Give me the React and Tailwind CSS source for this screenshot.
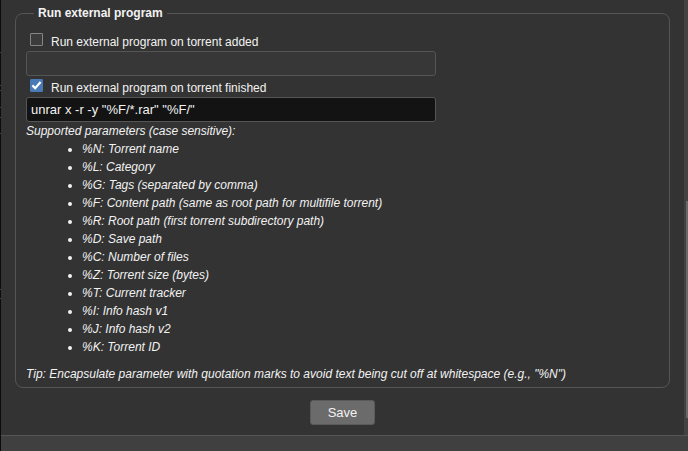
import { useState } from "react";

const parameters = [
  "%N: Torrent name",
  "%L: Category",
  "%G: Tags (separated by comma)",
  "%F: Content path (same as root path for multifile torrent)",
  "%R: Root path (first torrent subdirectory path)",
  "%D: Save path",
  "%C: Number of files",
  "%Z: Torrent size (bytes)",
  "%T: Current tracker",
  "%I: Info hash v1",
  "%J: Info hash v2",
  "%K: Torrent ID",
];

function ProgramOption({ id, label, initialEnabled, initialCommand }) {
  const [enabled, setEnabled] = useState(initialEnabled);
  const [command, setCommand] = useState(initialCommand);

  return (
    <div>
      <div className="flex items-start pt-[3px] pl-1">
        <span className="grid">
          <input
            id={id}
            type="checkbox"
            checked={enabled}
            onChange={(e) => setEnabled(e.target.checked)}
            className="peer col-start-1 row-start-1 size-[13px] appearance-none rounded-[1px] border border-[#858585] bg-[#3b3b3b] checked:border-[#4a7ab5] checked:bg-[#4a7ab5]"
          />
          <svg
            viewBox="0 0 13 13"
            aria-hidden="true"
            className="pointer-events-none invisible col-start-1 row-start-1 size-[13px] peer-checked:visible"
          >
            <path d="M2.4 6.4 5.2 9.2 10.6 3" fill="none" stroke="#fff" strokeWidth="2.2" />
          </svg>
        </span>
        <label htmlFor={id} className="ml-2">
          {label}
        </label>
      </div>
      <input
        type="text"
        aria-label={label + " command"}
        value={command}
        disabled={!enabled}
        onChange={(e) => setCommand(e.target.value)}
        className="block h-[25px] w-full max-w-[410px] rounded-[3px] border border-[#555555] bg-[#131313] px-1 text-[13px] text-[#f2f2f2] disabled:bg-[#373737]"
      />
    </div>
  );
}

function Scrollbar() {
  return (
    <div className="flex w-1 flex-col bg-[#424242] pl-[2px]" aria-hidden="true">
      <div className="grow-[201]" />
      <div className="grow-[217] bg-[#686868]" />
      <div className="grow-[17]" />
    </div>
  );
}

/* Sliver of the list behind the dialog, with its row lines. */
function BackgroundEdge() {
  return (
    <div className="w-px bg-[#0c0c0c]" aria-hidden="true">
      <div className="h-[53px] border-b border-[#444444]" />
      <div className="h-[33px] border-b border-[#444444]" />
      <div className="h-[5px] border-b border-[#444444]" />
      <div className="h-[17px] border-b border-[#444444]" />
      <div className="h-[10px] border-b border-[#444444]" />
      <div className="h-4 border-b border-[#444444]" />
      <div className="h-[156px] border-b border-[#444444]" />
      <div className="h-[9px] border-b border-[#444444]" />
    </div>
  );
}

export default function App() {
  return (
    <div className="flex min-h-screen bg-[#333333] font-['Liberation_Sans',Arial,sans-serif] text-[12px] leading-[18px] text-[#f2f2f2]">
      <BackgroundEdge />
      <div className="flex flex-1 flex-col">
        <div className="flex flex-1">
          <main className="flex-1 px-[14px] pt-1 pb-[10px]">
            <fieldset className="rounded-lg border border-[#555555] px-[10px] pt-2 pb-1">
              <legend className="ml-2 px-1 font-bold">Run external program</legend>
              <ProgramOption
                id="run-on-added"
                label="Run external program on torrent added"
                initialEnabled={false}
                initialCommand=""
              />
              <ProgramOption
                id="run-on-finished"
                label="Run external program on torrent finished"
                initialEnabled={true}
                initialCommand={'unrar x -r -y "%F/*.rar" "%F/"'}
              />
              <div className="italic">
                <p>Supported parameters (case sensitive):</p>
                <ul className="list-disc pl-14">
                  {parameters.map((text) => (
                    <li key={text}>{text}</li>
                  ))}
                </ul>
                <p className="pt-[9px]">
                  Tip: Encapsulate parameter with quotation marks to avoid text being cut off at
                  whitespace (e.g., "%N")
                </p>
              </div>
            </fieldset>
            <div className="mt-3 flex justify-center">
              <button
                type="button"
                className="h-[25px] w-[65px] rounded-[3px] border border-[#5a5a5a] bg-[#6b6b6b] text-[13px]"
              >
                Save
              </button>
            </div>
          </main>
          <Scrollbar />
        </div>
        <footer className="h-4 border-t border-[#555555] bg-[#404040]" />
      </div>
    </div>
  );
}
